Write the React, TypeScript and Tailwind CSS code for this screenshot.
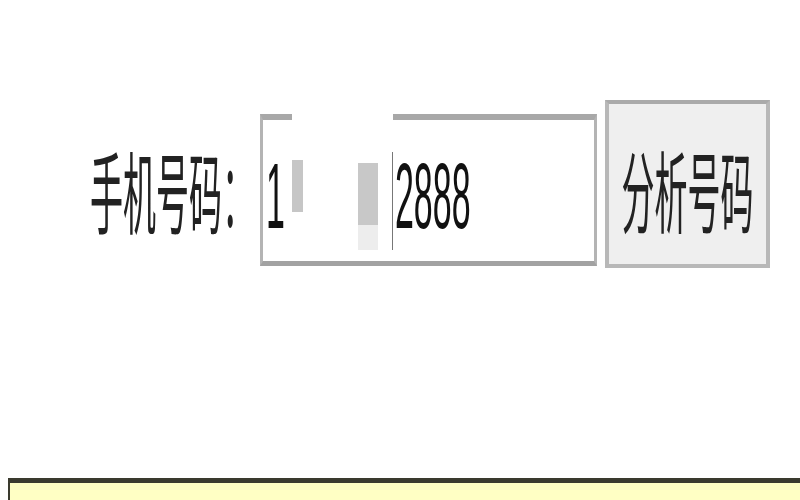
import React from "react";

const cjk = { fontFamily: '"Noto Sans CJK SC", "Noto Sans", sans-serif' };
const lat = { fontFamily: '"Liberation Sans", Arial, sans-serif' };

export default function App() {
  return (
    <div className="w-[800px] h-[500px] bg-white flex flex-col overflow-hidden">
      <div className="flex items-start pt-[100px] pl-[90px]">
        <div className="mt-[14px] h-[152px] w-[165px] flex items-center">
          <span
            className="inline-block text-[33px] leading-none text-[#222] scale-y-[2.7] origin-center whitespace-nowrap"
            style={cjk}
          >
            手机号码：
          </span>
        </div>
        <div className="relative ml-[5px] mt-[14px] h-[152px] w-[337px] border-x-[3px] border-t-[6px] border-b-[5px] border-x-[#b4b4b4] border-t-[#a8a8a8] border-b-[#a2a2a2] bg-white flex items-center pl-[3px]">
          <span
            className="inline-block text-[34px] leading-none text-[#111] scale-y-[2.7] origin-center mt-[10px]"
            style={lat}
          >
            1
          </span>
          <span
            className="inline-block ml-[110px] text-[34px] leading-none text-[#111] scale-y-[2.7] origin-center mt-[10px]"
            style={lat}
          >
            2888
          </span>
          <div className="absolute left-[29px] -top-[12px] w-[101px] h-[147px] bg-white">
            <div className="absolute left-0 top-[52px] w-[11px] h-[52px] bg-[#c6c6c6]" />
            <div className="absolute left-[66px] top-[55px] w-[20px] h-[62px] bg-[#c8c8c8]" />
            <div className="absolute left-[66px] top-[117px] w-[20px] h-[25px] bg-[#ededed]" />
            <div className="absolute left-[100px] top-[44px] w-[1px] h-[98px] bg-[#777]" />
          </div>
        </div>
        <button
          className="ml-[8px] h-[168px] w-[165px] bg-[#efefef] border-[4px] border-[#b8b8b8] border-t-[#aaaaaa] flex items-center justify-center"
          type="button"
        >
          <span
            className="inline-block text-[33px] leading-none text-[#222] scale-y-[2.7] origin-center mt-[10px] whitespace-nowrap"
            style={cjk}
          >
            分析号码
          </span>
        </button>
      </div>
      <div className="mt-auto ml-[8px] h-[22px] border-t-[5px] border-l-[2px] border-[#3a3a2e] bg-[#ffffc4]" />
    </div>
  );
}
